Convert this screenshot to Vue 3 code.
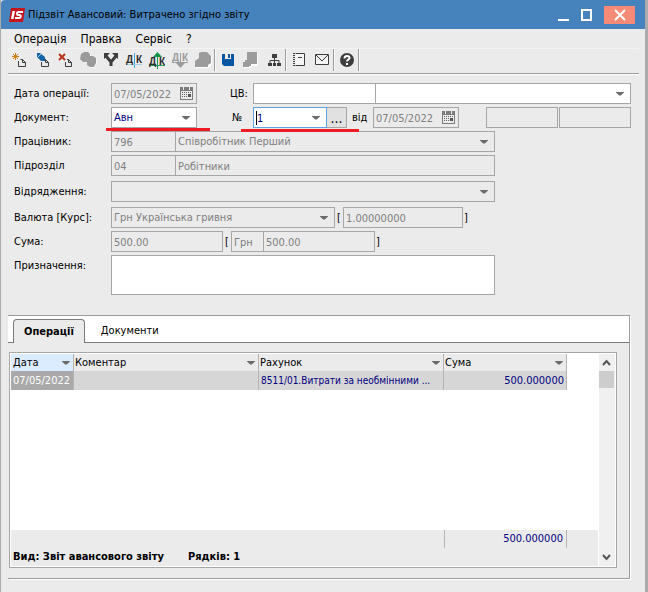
<script setup>
import { ref } from 'vue'

const menus = ['Операція', 'Правка', 'Сервіс', '?']
const docType = ref('Авн')
const docNumber = ref('1')
const centre = ref('')
const centreName = ref('')
const purpose = ref('')
const tabs = ['Операції', 'Документи']
const activeTab = ref('Операції')
const columns = ['Дата', 'Коментар', 'Рахунок', 'Сума']
const rows = [
  { date: '07/05/2022', comment: '', account: '8511/01.Витрати за необмінними ...', sum: '500.000000' },
]
</script>

<template>
  <main class="window">
    <header class="titlebar">
      <svg class="logo" viewBox="0 0 16 14" aria-hidden="true">
        <path d="M2 0H16L14 14H0Z" fill="#c4161c" />
        <path d="M3.500 3H6L4.500 11H2Z" fill="#fff" />
        <path d="M14 4H9.500C7.500 4 7.500 7 9.500 7H10.500C12.500 7 12 10 10 10H6" fill="none" stroke="#fff" stroke-width="2" />
      </svg>
      <h1>Підзвіт Авансовий: Витрачено згідно звіту</h1>
      <div class="controls">
        <button type="button" class="ctl" aria-label="Згорнути"><svg viewBox="0 0 12 12"><path d="M0 11H11" stroke="#fff" stroke-width="2" /></svg></button>
        <button type="button" class="ctl" aria-label="Розгорнути"><svg viewBox="0 0 12 12"><path d="M1 1H10V11H1Z" fill="none" stroke="#fff" stroke-width="2" /></svg></button>
        <button type="button" class="ctl close" aria-label="Закрити"><svg viewBox="0 0 12 12"><path d="M1 1L11 11M11 1L1 11" stroke="#fff" stroke-width="2" /></svg></button>
      </div>
    </header>

    <nav class="menu">
      <button v-for="m in menus" :key="m" type="button">{{ m }}</button>
    </nav>

    <div class="toolbar" role="toolbar">
      <button type="button" aria-label="Створити">
        <svg viewBox="0 0 23 22">
          <path d="M8.500 4V11M5 7.500H12M6 5L11 10M11 5L6 10" stroke="#c9821a" />
          <path d="M11.500 12V17.500H18.500V13.500L15.500 10.500H13.500M15.500 10.500V13.500H18.500" class="doc" />
        </svg>
      </button>
      <button type="button" aria-label="Змінити">
        <svg viewBox="0 0 23 22">
          <path d="M11.500 13V17.500H18.500V13.500L15.500 10.500H14M15.500 10.500V13.500H18.500" class="doc" />
          <path d="M7 4H10L15 8V12H11L7 8Z" fill="#1763a8" />
          <path d="M8 8L11 5" stroke="#a9d2ee" />
        </svg>
      </button>
      <button type="button" aria-label="Видалити">
        <svg viewBox="0 0 23 22">
          <path d="M12.500 13V17.500H18.500V13.500L15.500 10.500H14M15.500 10.500V13.500H18.500" class="doc" />
          <path d="M6 5L12 11M12 5L6 11" stroke="#b8321a" stroke-width="2" />
        </svg>
      </button>
      <button type="button" disabled aria-label="Групувати">
        <svg viewBox="0 0 23 22">
          <path class="shade" d="M6 5L9 3L14 4L15 7L19 8L21 12L20 17L17 19L13 18L11 14L8 13L5 11Z" />
          <path class="dim" d="M5 5L8 3L12 3L14 5V7H17L20 9V14L18 18H14L11 16V13H7L4 10Z" />
        </svg>
      </button>
      <button type="button" aria-label="Розділити">
        <svg viewBox="0 0 23 22">
          <path d="M12 17V13L7 7M12 13L17 7" fill="none" stroke="#3d3d3d" stroke-width="3" />
          <path d="M5 4H11L5 10ZM19 4H13L19 10Z" fill="#3d3d3d" />
        </svg>
      </button>
      <button type="button" aria-label="Проводки">
        <svg viewBox="0 0 23 22">
          <path d="M12.500 4V19" stroke="#3ba7dc" />
          <path d="M4 15.500H20" stroke="#9fd0ea" />
          <text x="4" y="14">Д</text><text x="14" y="14">К</text>
        </svg>
      </button>
      <button type="button" aria-label="Провести">
        <svg viewBox="0 0 23 22">
          <path d="M4 16.500H20" stroke="#2a9a50" />
          <path d="M12.500 6V20" stroke="#149548" /><path d="M8 8L12.500 3L17 8Z" fill="#149548" />
          <text x="4" y="16">Д</text><text x="14" y="16">К</text>
        </svg>
      </button>
      <button type="button" disabled aria-label="Відмінити проводки">
        <svg viewBox="0 0 23 22">
          <path d="M4 13.500H20M12.500 4V16" stroke="#9b9b9b" /><path d="M8 14H17L12.500 19Z" fill="#9b9b9b" />
          <text x="4" y="12" class="off-text">Д</text><text x="14" y="12" class="off-text">К</text>
        </svg>
      </button>
      <button type="button" disabled aria-label="Об'єднати">
        <svg viewBox="0 0 23 22">
          <path class="shade" d="M9 4H17L21 7V15L18 19H5V12L8 10Z" />
          <path class="dim" d="M8 4L10 3H16L18 5L20 7V14L17 16V18H4V12L8 9Z" />
        </svg>
      </button>
      <span class="sep"></span>
      <button type="button" aria-label="Зберегти">
        <svg viewBox="0 0 23 22">
          <path d="M6 5H18V17H8L6 15Z" fill="#0855a2" />
          <path d="M9 5H15V10H9Z" fill="#ebebeb" /><path d="M12 5H14V9H12Z" fill="#0855a2" />
        </svg>
      </button>
      <button type="button" disabled aria-label="Копіювати">
        <svg viewBox="0 0 23 22">
          <path class="shade" d="M9 4H19V17H12V19H5V13L8 10Z" />
          <path class="dim" d="M8 3H18V15H12V17H10V18H4V13H6V11H8Z" />
        </svg>
      </button>
      <button type="button" aria-label="Структура">
        <svg viewBox="0 0 23 22">
          <path d="M10 5H15V9H10ZM6 14H10V17H6ZM11 14H14V17H11ZM15 14H19V17H15Z" fill="#3d3d3d" />
          <path d="M12.500 9V14M8 14V11.500H17V14" fill="none" stroke="#3d3d3d" />
        </svg>
      </button>
      <span class="sep"></span>
      <button type="button" aria-label="Журнал">
        <svg viewBox="0 0 23 22">
          <path d="M8.500 4.500H17.500V16.500H8.500" fill="#f4f4f4" stroke="#3d3d3d" />
          <path d="M7 4V17" stroke="#3d3d3d" stroke-width="2" stroke-dasharray="1 1" /><path d="M11 8.500H15" stroke="#3d3d3d" />
        </svg>
      </button>
      <button type="button" aria-label="Пошта">
        <svg viewBox="0 0 23 22">
          <path d="M5.500 5.500H18.500V15.500H5.500ZM6 6L12 12L18 6" fill="#f4f4f4" stroke="#3d3d3d" />
        </svg>
      </button>
      <span class="sep"></span>
      <button type="button" aria-label="Довідка">
        <svg viewBox="0 0 23 22">
          <circle cx="12" cy="11" r="7" fill="#3d3d3d" />
          <path d="M9.500 9.500C9.500 6 14.500 6.500 14.500 9C14.500 10.500 12 10.500 12 12.500M12 14V16" fill="none" stroke="#fff" stroke-width="2" />
        </svg>
      </button>
      <span class="sep"></span>
    </div>

    <form class="form" @submit.prevent>
      <div class="row">
        <label class="lead" for="opdate">Дата операції:</label>
        <span class="field date off"><input id="opdate" value="07/05/2022" disabled><svg viewBox="0 0 13 13"><path d="M0 0H13V13H0Z" fill="#7b7b7b" /><path d="M1 4H12V12H1Z" fill="#ebebeb" /><path d="M3.500 0V3M9.500 0V3" stroke="#ebebeb" /><path d="M2 5.500H12M2 7.500H12M2 9.500H8" stroke="#666" stroke-dasharray="1 1" /><path d="M8 7H11V10H8Z" fill="#555" /></svg></span>
        <label class="mid" for="centre">ЦВ:</label>
        <span class="field cv"><input id="centre" v-model="centre"></span>
        <span class="field joined fill"><select v-model="centreName" aria-label="Назва ЦВ"><option value=""></option></select><i class="arrow"></i></span>
      </div>
      <div class="row">
        <label class="lead" for="doctype">Документ:</label>
        <span class="field date marked"><select id="doctype" v-model="docType"><option>Авн</option></select><i class="arrow"></i></span>
        <label class="mid num" for="docnum">№</label>
        <span class="field number active marked"><input id="docnum" v-model="docNumber"><i class="caret"></i><i class="arrow"></i></span>
        <button type="button" class="more" aria-label="Вибрати номер">...</button>
        <label class="from" for="docdate">від</label>
        <span class="field date off"><input id="docdate" value="07/05/2022" disabled><svg viewBox="0 0 13 13"><path d="M0 0H13V13H0Z" fill="#7b7b7b" /><path d="M1 4H12V12H1Z" fill="#ebebeb" /><path d="M3.500 0V3M9.500 0V3" stroke="#ebebeb" /><path d="M2 5.500H12M2 7.500H12M2 9.500H8" stroke="#666" stroke-dasharray="1 1" /><path d="M8 7H11V10H8Z" fill="#555" /></svg></span>
        <span class="pair">
          <span class="field off"><input aria-label="Стан" disabled></span>
          <span class="field off"><input aria-label="Ознака" disabled></span>
        </span>
      </div>
      <div class="row">
        <label class="lead" for="emp">Працівник:</label>
        <span class="field code off"><input id="emp" value="796" disabled></span>
        <span class="field joined name off"><select aria-label="Ім'я працівника" disabled><option>Співробітник Перший</option></select><i class="arrow"></i></span>
      </div>
      <div class="row">
        <label class="lead" for="dep">Підрозділ</label>
        <span class="field code off"><input id="dep" value="04" disabled></span>
        <span class="field joined name off"><input aria-label="Назва підрозділу" value="Робітники" disabled></span>
      </div>
      <div class="row gap">
        <label class="lead" for="trip">Відрядження:</label>
        <span class="field wide off"><select id="trip" disabled><option></option></select><i class="arrow"></i></span>
      </div>
      <div class="row gap">
        <label class="lead" for="cur">Валюта [Курс]:</label>
        <span class="field currency off"><select id="cur" disabled><option>Грн Українська гривня</option></select><i class="arrow"></i></span>
        <span class="open">[</span>
        <span class="field rate off"><input aria-label="Курс" value="1.00000000" disabled></span>
        <span class="shut">]</span>
      </div>
      <div class="row">
        <label class="lead" for="sum">Сума:</label>
        <span class="field amount off"><input id="sum" value="500.00" disabled></span>
        <span class="open">[</span>
        <span class="field unit off"><input aria-label="Валюта суми" value="Грн" disabled></span>
        <span class="field joined amount off"><input aria-label="Сума у валюті" value="500.00" disabled></span>
        <span class="shut">]</span>
      </div>
      <div class="row">
        <label class="lead" for="purpose">Призначення:</label>
        <textarea id="purpose" v-model="purpose" class="wide"></textarea>
      </div>
    </form>

    <section class="panel">
      <div class="tabs" role="tablist">
        <button v-for="t in tabs" :key="t" type="button" role="tab" :aria-selected="t === activeTab" :class="{ on: t === activeTab }" @click="activeTab = t">{{ t }}</button>
      </div>
      <div class="grid">
        <div class="sheet">
          <table>
            <colgroup><col class="c-date"><col class="c-text"><col class="c-text"><col class="c-sum"></colgroup>
            <thead>
              <tr><th v-for="c in columns" :key="c" scope="col"><span class="head">{{ c }}<i class="arrow"></i></span></th></tr>
            </thead>
            <tbody>
              <tr v-for="r in rows" :key="r.date">
                <td class="current">{{ r.date }}</td><td>{{ r.comment }}</td><td class="account">{{ r.account }}</td><td class="right">{{ r.sum }}</td>
              </tr>
            </tbody>
          </table>
          <footer class="summary">
            <div class="total"><span>500.000000</span></div>
            <div class="status"><b>Вид: Звіт авансового звіту</b><b>Рядків: 1</b></div>
          </footer>
        </div>
        <div class="scroll">
          <button type="button" aria-label="Вгору"><svg viewBox="0 0 9 7"><path d="M1 6L4.500 2L8 6" /></svg></button>
          <div class="thumb"></div>
          <button type="button" class="down" aria-label="Вниз"><svg viewBox="0 0 9 7"><path d="M1 1L4.500 5L8 1" /></svg></button>
        </div>
      </div>
    </section>
  </main>
</template>

<style>
body { margin: 0; background: #ababab; }
</style>

<style scoped>
* { box-sizing: border-box; }
button, input, select, textarea { font: inherit; color: inherit; margin: 0; padding: 0; border: 0; background: none; border-radius: 0; outline: 0; }
select { appearance: none; }
input:disabled, select:disabled { opacity: 1; color: inherit; }
svg { display: block; }

.window {
  min-height: 100vh;
  display: flex;
  flex-direction: column;
  background: #ebebeb;
  border-left: 1px solid #ababab;
  border-right: 3px solid #ababab;
  font-family: "DejaVu Sans Condensed", "DejaVu Sans", sans-serif;
  font-size: 11px;
  color: #000;
}
.titlebar { display: flex; align-items: center; height: 29px; padding: 0 10px 0 8px; background: #4682bc; border-top-left-radius: 4px; }
.logo { width: 16px; height: 14px; }
h1 { flex: 1; margin: 0 0 0 3px; font-size: 11px; font-weight: 400; }
.controls { display: flex; align-items: center; }
.ctl { width: 23px; height: 18px; display: grid; place-items: center; }
.ctl svg { width: 12px; height: 12px; }
.close { width: 31px; margin-left: 6px; background: #f68a78; }

.menu { display: flex; gap: 14px; height: 20px; margin: 0 6px 0 7px; padding: 0 6px; border-bottom: 1px solid #f3f3f3; font-size: 12px; line-height: 18px; }
.toolbar { display: flex; height: 25px; margin: 0 6px 0 7px; border-bottom: 1px solid #9c9c9c; box-shadow: 0 1px #fff; }
.toolbar button { width: 23px; height: 22px; margin-left: -1px; margin-right: 1px; }
.toolbar svg { width: 23px; height: 22px; }
.toolbar text { font: bold 10px "Liberation Sans", sans-serif; fill: #2b2b2b; }
.toolbar .off-text { fill: #9b9b9b; }
.doc { fill: none; stroke: #3d3d3d; }
.dim { fill: #9b9b9b; }
.shade { fill: #fff; }
.sep { width: 2px; height: 22px; margin-left: -1px; margin-right: 1px; border-left: 1px solid #9c9c9c; border-right: 1px solid #f8f8f8; }

.form { display: flex; flex-direction: column; gap: 3px; padding: 9px 14px 20px 13px; }
.row { display: flex; line-height: 21px; }
.gap { margin-top: 2px; }
.lead { width: 97px; flex: none; }
.mid { width: 23px; margin-left: 33px; }
.num { padding-left: 2px; }
.field { position: relative; display: flex; align-items: center; height: 21px; flex: none; border: 1px solid #a6a6a6; background: #fff; color: #00007f; }
.field input, .field select { flex: 1; width: 100%; min-width: 0; height: 19px; padding: 1px 0 0 2px; }
.field select { padding-top: 0; line-height: 19px; }
.off { background: #ebebeb; color: #808080; }
.joined { margin-left: -1px; }
.date { width: 86px; }
.date svg { width: 13px; height: 13px; margin-right: 3px; flex: none; }
.cv { width: 123px; }
.row .fill { flex: 1; }
.number { width: 74px; }
.field.number input { padding-left: 3px; }
.active { border-color: #5ea3e6; }
.caret { position: absolute; left: 2px; top: 3px; width: 1px; height: 14px; background: #000; }
.more { width: 20px; height: 21px; border: 1px solid #a6a6a6; border-left: 0; background: #e1e1e1; font-size: 14px; line-height: 16px; }
.from { width: 26px; padding-left: 5px; }
.pair { display: flex; flex: 1; gap: 1px; margin-left: 27px; }
.pair .field { flex: 1; }
.code { width: 65px; }
.name { width: 320px; }
.wide { width: 384px; }
.currency { width: 224px; }
.rate { width: 120px; }
.amount { width: 112px; }
.unit { width: 33px; }
.open { width: 8px; padding-left: 2px; }
.shut { padding-left: 1px; }
textarea.wide { height: 40px; border: 1px solid #a6a6a6; background: #fff; resize: none; }
.arrow { flex: none; width: 8px; height: 4px; background: #6b6b6b; clip-path: polygon(0 0, 100% 0, 100% 25%, 60% 100%, 40% 100%, 0 25%); }
.field .arrow { margin-right: 6px; pointer-events: none; }

/* Red underline beneath the fields that need attention */
.marked::after { content: ""; position: absolute; z-index: 1; left: -6px; right: -14px; top: 20px; height: 3px; background: #ed1c24; }
.number.marked::after { left: -13px; right: -33px; top: 21px; }

.panel { flex: 1; display: flex; flex-direction: column; margin: 0 15px 13px 7px; border: 1px solid #9c9c9c; border-left: 0; box-shadow: 1px 1px #fff; }
.tabs { display: flex; height: 27px; padding: 3px 5px 0; background: #fff; border-bottom: 1px solid #7b7b7b; }
.tabs button { height: 23px; padding: 0 16px; }
.tabs .on { padding: 0 10px; background: #ebebeb; border: 1px solid #7b7b7b; border-bottom: 0; border-radius: 4px 4px 0 0; font-weight: 700; height: 24px; }
.grid { flex: 1; display: flex; gap: 1px; margin: 9px 12px 10px 1px; padding: 1px; border: 1px solid #a6a6a6; background: #fff; }
.sheet { flex: 1; min-width: 0; display: flex; flex-direction: column; }
table { width: calc(100% - 31px); table-layout: fixed; border-collapse: separate; border-spacing: 0; }
.c-date { width: 63px; }
.c-sum { width: 123px; }
th, td { padding: 0 2px; border-right: 1px solid #b4b4b4; overflow: hidden; white-space: nowrap; text-overflow: ellipsis; text-align: left; }
th { height: 17px; padding: 0 3px 0 1px; background: #ebebeb; font-weight: 400; }
th:first-child { padding-left: 2px; background: #dcecff; }
.head { display: flex; align-items: center; justify-content: space-between; line-height: 17px; }
td { height: 19px; background: #d6d6d6; color: #00007f; line-height: 18px; }
td.current { background: #a9a9a9; color: #fff; text-overflow: clip; }
td.account { font-size: 10px; }
.right { text-align: right; }
.summary { margin-top: auto; height: 36px; background: #ebebeb; }
.total { display: flex; justify-content: flex-end; height: 18px; padding-right: 31px; line-height: 17px; color: #00007f; }
.total span { width: 123px; padding-right: 3px; border-left: 1px solid #b4b4b4; border-right: 1px solid #b4b4b4; text-align: right; }
.status { display: flex; gap: 24px; padding-left: 2px; line-height: 18px; }
.scroll { width: 16px; display: flex; flex-direction: column; background: #f0f0f0; }
.scroll button { width: 15px; height: 17px; display: grid; place-items: center; }
.scroll svg { width: 9px; height: 7px; fill: none; stroke: #555; stroke-width: 2; }
.thumb { width: 15px; height: 17px; background: #cdcdcd; }
.down { margin-top: auto; }
</style>
